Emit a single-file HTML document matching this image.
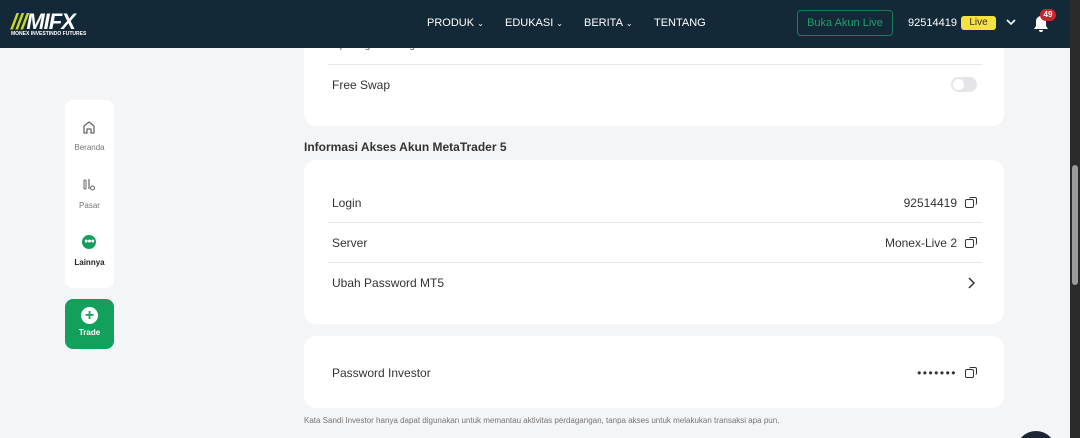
<!DOCTYPE html><html><head><style>
*{margin:0;padding:0;box-sizing:border-box}
html,body{width:1080px;height:438px;overflow:hidden}
body{background:#f4f5f7;font-family:"Liberation Sans",sans-serif;position:relative;color:#333}
.hdr{position:absolute;left:0;top:0;width:1070px;height:48px;background:#142938;z-index:10}
.abs{position:absolute}
.nav{color:#fff;font-size:11px;top:17px}
.nav small{font-size:8px;margin-left:3px}
.card{position:absolute;left:304px;width:700px;background:#fff;border-radius:12px}
.row{position:absolute;left:28px;right:30px;font-size:12px;color:#333}
.line{position:absolute;left:24px;right:22px;height:1px;background:#e6e7ea}
.cp{display:inline-block;width:9px;height:9px;border:1.3px solid #333;border-radius:2px;vertical-align:-1px;margin-left:8px;position:relative}
.cp:after{content:"";position:absolute;right:-3.5px;top:-3.5px;width:7px;height:7px;border-top:1.3px solid #333;border-right:1.3px solid #333;border-radius:2px}
</style></head><body>
<div class="hdr">
 <div class="abs" style="left:11px;top:9px;font:italic 900 22px 'Liberation Sans';color:#fff;letter-spacing:-1px"><span style="color:#c9d928">///</span>MIFX</div>
 <div class="abs" style="left:11px;top:31px;font:bold 5px 'Liberation Sans';color:#fff">MONEX INVESTINDO FUTURES</div>
 <div class="abs nav" style="left:427px">PRODUK<small>⌄</small></div>
 <div class="abs nav" style="left:505px">EDUKASI<small>⌄</small></div>
 <div class="abs nav" style="left:584px">BERITA<small>⌄</small></div>
 <div class="abs nav" style="left:654px">TENTANG</div>
 <div class="abs" style="left:797px;top:10px;width:96px;height:26px;border:1px solid #1e7a55;border-radius:4px;color:#1ea06a;font-size:11px;text-align:center;line-height:24px">Buka Akun Live</div>
 <div class="abs" style="left:908px;top:17px;color:#fff;font-size:11px">92514419</div>
 <div class="abs" style="left:961px;top:16px;width:35px;height:14px;background:#f5e23e;border-radius:3px;font-size:10px;text-align:center;line-height:14px;color:#333">Live</div>
 <svg class="abs" style="left:1006px;top:19px" width="10" height="7" viewBox="0 0 10 7"><path d="M1 1l4 4 4-4" stroke="#fff" stroke-width="1.6" fill="none"/></svg>
 <svg class="abs" style="left:1033px;top:15px" width="16" height="18" viewBox="0 0 16 18"><path d="M8 1a5 5 0 0 0-5 5v5l-2 3h14l-2-3V6a5 5 0 0 0-5-5zM6 15a2 2 0 0 0 4 0" fill="#fff"/></svg>
 <div class="abs" style="left:1040px;top:9px;width:16px;height:12px;background:#d0242c;border-radius:6px;color:#fff;font:bold 8px 'Liberation Sans';text-align:center;line-height:12px">49</div>
</div>
<div class="abs" style="left:1070px;top:0;width:10px;height:438px;background:#2b2b2b;z-index:11"></div>
<div class="abs" style="left:1072px;top:165px;width:6px;height:120px;background:#9a9a9a;border-radius:3px;z-index:12"></div>

<div class="abs" style="left:65px;top:100px;width:49px;height:188px;background:#fff;border-radius:8px"></div>
<svg class="abs" style="left:82px;top:120px" width="14" height="14" viewBox="0 0 14 14"><path d="M2 13V6l5-4 5 4v7H9V9H5v4z" fill="none" stroke="#666" stroke-width="1.3" stroke-linejoin="round"/></svg>
<div class="abs" style="left:65px;top:143px;width:49px;text-align:center;font-size:8px;color:#777">Beranda</div>
<svg class="abs" style="left:82px;top:178px" width="14" height="14" viewBox="0 0 14 14"><rect x="2" y="2" width="2" height="9" rx="1" stroke="#666" fill="none"/><path d="M7 1v10" stroke="#666" stroke-width="1.2"/><circle cx="10.5" cy="10" r="2" stroke="#666" fill="none"/></svg>
<div class="abs" style="left:65px;top:201px;width:49px;text-align:center;font-size:8px;color:#777">Pasar</div>
<div class="abs" style="left:82px;top:235px;width:14px;height:14px;border-radius:7px;background:#12a05a;color:#fff;font-size:7px;text-align:center;line-height:13px;letter-spacing:-1px">●●●</div>
<div class="abs" style="left:65px;top:258px;width:49px;text-align:center;font:bold 8px 'Liberation Sans';color:#222">Lainnya</div>
<div class="abs" style="left:65px;top:299px;width:49px;height:50px;background:#12a05a;border-radius:8px"></div>
<div class="abs" style="left:81px;top:307px;width:17px;height:17px;border-radius:9px;background:#fff;color:#12a05a;font:bold 16px 'Liberation Sans';text-align:center;line-height:17px">+</div>
<div class="abs" style="left:65px;top:328px;width:49px;text-align:center;font:bold 8px 'Liberation Sans';color:#fff">Trade</div>

<div class="card" style="top:20px;height:106px">
 <div class="row" style="top:20px;font-size:10px;color:#555">Opsi High Leverage Tersedia</div>
 <div class="line" style="top:44px"></div>
 <div class="row" style="top:58px">Free Swap</div>
 <div class="abs" style="left:647px;top:57px;width:26px;height:15px;border-radius:8px;background:#e5e5e7"><div style="margin:2px;width:11px;height:11px;border-radius:6px;background:#fff"></div></div>
</div>
<div class="abs" style="left:304px;top:140px;font:bold 12px 'Liberation Sans';color:#333">Informasi Akses Akun MetaTrader 5</div>
<div class="card" style="top:160px;height:164px">
 <div class="row" style="top:36px">Login<span style="float:right">92514419<span class="cp"></span></span></div>
 <div class="line" style="top:62px"></div>
 <div class="row" style="top:76px">Server<span style="float:right">Monex-Live 2<span class="cp"></span></span></div>
 <div class="line" style="top:102px"></div>
 <div class="row" style="top:116px">Ubah Password MT5</div>
 <svg class="abs" style="left:663px;top:117px" width="8" height="12" viewBox="0 0 8 12"><path d="M2 1l5 5-5 5" stroke="#333" stroke-width="1.5" fill="none"/></svg>
</div>
<div class="card" style="top:336px;height:72px">
 <div class="row" style="top:30px">Password Investor<span style="float:right;letter-spacing:1.5px">•••••••<span class="cp"></span></span></div>
</div>
<div class="abs" style="left:304px;top:416px;font-size:8px;color:#777">Kata Sandi Investor hanya dapat digunakan untuk memantau aktivitas perdagangan, tanpa akses untuk melakukan transaksi apa pun.</div>
<div class="abs" style="left:1016px;top:431px;width:40px;height:7px;overflow:hidden"><div style="width:40px;height:40px;border-radius:20px;background:#1c2533"></div></div>
</body></html>
